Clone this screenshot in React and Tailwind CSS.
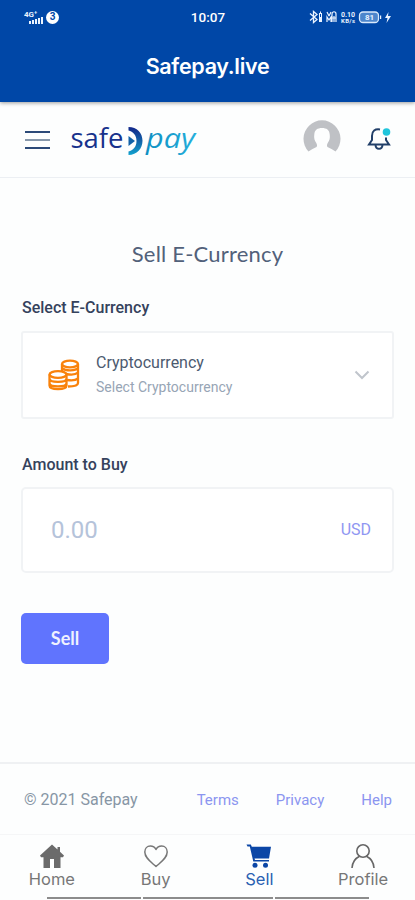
const HomeIcon = () => (
  <svg width="26" height="26" viewBox="0 0 26 26" fill="#6b6b6b">
    <path d="M13 1.500 1 12.500l1 1.700h2.500V25H11v-9h4v9h6.500V14.200H24l1-1.700-4-3.700V4h-2.500v2.500z" />
  </svg>
);

const HeartIcon = () => (
  <svg width="26" height="26" viewBox="0 0 26 26" fill="none" stroke="#777" strokeWidth="1.500">
    <path
      strokeLinejoin="round"
      d="M13 23.500C8 19 1.800 15 1.800 9 1.800 5.500 4.200 3 7.300 3 10 3 12 4.300 13 6.500 14 4.300 16 3 18.700 3c3.100 0 5.500 2.500 5.500 6 0 6-6.200 10-11.200 14.500z"
    />
  </svg>
);

const CartIcon = () => (
  <svg width="26" height="26" viewBox="0 0 26 26" fill="#0b46a6">
    <path d="M.5 1.500h4.300l1 2.200H25L23 15.500H8.500l.5 1.500h14v1.500H7.300L3.800 3.500H1.500z" />
    <circle cx="9" cy="22.200" r="2.500" />
    <circle cx="19.500" cy="22.200" r="2.500" />
  </svg>
);

const ProfileIcon = () => (
  <svg width="26" height="26" viewBox="0 0 26 26" fill="none" stroke="#666" strokeWidth="1.600">
    <circle cx="13" cy="8" r="6.200" />
    <path d="M2 25c.4-6.200 3-9.500 7.500-11.700M24 25c-.4-6.200-3-9.500-7.500-11.700" />
  </svg>
);

const CoinsIcon = () => (
  <svg
    width="32"
    height="32"
    viewBox="0 0 32 32"
    fill="none"
    stroke="#f9820b"
    strokeWidth="2.300"
    className="shrink-0"
  >
    <ellipse cx="22" cy="5" rx="8" ry="3.300" />
    <path d="M14 5v7M30 5v19c0 2-3.500 3.500-10 3.500M14.500 9.500c3 2.500 13 2.500 15.500-.5M18 15c5 1 10 .5 12-1.500M19 21c5 .8 9 .2 11-1.700" />
    <ellipse cx="10" cy="15.500" rx="8.500" ry="3.300" />
    <path d="M1.500 15.500v11c0 4.700 17 4.700 17 0v-11M1.500 19.500c0 4.500 17 4.500 17 0M1.500 24c0 4.500 17 4.500 17 0" />
  </svg>
);

const Logo = () => (
  <svg width="134" height="52" viewBox="0 -6 134 52" className="ml-5">
    <defs>
      <linearGradient id="mark" x1="0" y1="0" x2="0" y2="1">
        <stop offset="0" stopColor="#12268a" />
        <stop offset="0.500" stopColor="#1262a8" />
        <stop offset="1" stopColor="#12a3cf" />
      </linearGradient>
      <linearGradient id="pay" x1="0" y1="0" x2="1" y2="0">
        <stop offset="0" stopColor="#0d8fc2" />
        <stop offset="1" stopColor="#25b0dc" />
      </linearGradient>
    </defs>
    <text
      x="0.500"
      y="28"
      fontFamily="'Open Sans', sans-serif"
      fontSize="28"
      fill="#17328c"
      textLength="53"
      lengthAdjust="spacingAndGlyphs"
    >
      safe
    </text>
    <path
      d="M58.500 7C67 7 72.500 13 72.500 20.800S67 35 58.500 35v-3.600C63 30.500 66.500 27 66.500 21S63 11.500 58.500 10.500z"
      fill="url(#mark)"
    />
    <path d="M58.500 16l6.500 5-6.500 5z" fill="#1262a8" />
    <text
      x="76"
      y="28"
      fontFamily="'Open Sans', sans-serif"
      fontSize="28"
      fontStyle="italic"
      fill="url(#pay)"
      textLength="49"
      lengthAdjust="spacingAndGlyphs"
    >
      pay
    </text>
  </svg>
);

const StatusBar = () => (
  <div className="flex h-[34px] items-center justify-between pl-6 pr-[23px] text-white">
    <div className="flex w-[130px] items-center gap-[2px]">
      <svg width="20" height="15" viewBox="0 0 20 15" fill="#eaf3ff">
        <text x="0" y="7" fontFamily="Roboto, sans-serif" fontSize="8" fontWeight="700">
          4G⁺
        </text>
        <path d="M5 11h2v3H5zM8 10h2v4H8zM11 9h2v5h-2zM14 8h2v6h-2zM17 7h2v7h-2z" />
      </svg>
      <span className="flex size-[13px] items-center justify-center rounded-full bg-white text-[10px] font-bold leading-none text-[#0047a7]">
        3
      </span>
    </div>
    <span className="text-[13.500px] font-medium">10:07</span>
    <div className="flex w-[130px] items-center justify-end">
      <svg width="83" height="16" viewBox="0 0 83 16" fill="#eaf3ff">
        <path d="M1 4.500l7 6-3.500 3v-11l3.500 3-7 6" fill="none" stroke="#eaf3ff" strokeWidth="1.300" />
        <path d="M10 4h3v9h-3zM11 2.500h1V4h-1z" />
        <path d="M11 5h1v3h-1z" fill="#0047a7" />
        <path
          d="M18 3l2 4M22 3l-2 4M18 13V8l2 3 2-3v5M23 13V5c0-3 4-3 4 0v8M25 7v6M23 9h4"
          fill="none"
          stroke="#eaf3ff"
          strokeWidth="1.200"
        />
        <text x="32" y="7.500" fontFamily="Roboto, sans-serif" fontSize="7" fontWeight="700" textLength="14">
          0.10
        </text>
        <text x="32" y="14" fontFamily="Roboto, sans-serif" fontSize="6" fontWeight="700" textLength="14">
          KB/s
        </text>
        <rect x="50.500" y="3" width="19" height="10.500" rx="3.500" fill="#4d86cc" stroke="#d9e9fb" strokeWidth="1.300" />
        <path d="M71 6.500h1.200v3.500H71z" />
        <text x="56" y="11.300" fontFamily="Roboto, sans-serif" fontSize="8" fontWeight="700">
          81
        </text>
        <path d="M79.500 3l-3.500 6h2.500l-1 5 4.500-7h-3z" />
      </svg>
    </div>
  </div>
);

const tabs = [
  { name: 'Home', icon: HomeIcon },
  { name: 'Buy', icon: HeartIcon },
  { name: 'Sell', icon: CartIcon, active: true },
  { name: 'Profile', icon: ProfileIcon },
];

const App = () => {
  return (
    <div className="flex h-[900px] w-[415px] flex-col overflow-hidden bg-[#fdfefe] font-['Roboto',sans-serif]">
      <header className="z-10 h-[102px] shrink-0 bg-[#0047a7] shadow-[0_1px_4px_rgba(0,0,0,0.4)]">
        <StatusBar />
        <h1 className="mt-4 text-center font-['Inter',sans-serif] text-[21.500px] font-semibold leading-8 tracking-[-0.3px] text-white">
          Safepay.live
        </h1>
      </header>

      <div className="flex h-[76px] shrink-0 items-center border-b border-[#eceff3] pl-[25px] pr-6">
        <div className="flex w-[25px] shrink-0 flex-col gap-[6px]">
          <span className="h-[2px] bg-[#2c4a78]" />
          <span className="h-[2px] bg-[#8798ab]" />
          <span className="h-[2px] bg-[#2c4a78]" />
        </div>
        <Logo />
        <svg width="38" height="38" viewBox="0 0 38 38" className="-mt-1 ml-auto mr-px">
          <path
            d="M5.500 32.500A18.500 18.500 0 1 1 32.500 32.500C30 30.500 27 29.500 24.500 28c-1-1-.5-3 .5-4.500 2-3 2-5 1.700-8C26.500 11 23.500 9 19 9s-7.500 2-7.700 6.500c-.3 3-.3 5 1.700 8 1 1.500 1.500 3.500.5 4.500-2.500 1.500-5.500 2.500-8 4.500z"
            fill="#bfc1c5"
          />
        </svg>
        <svg width="24" height="26" viewBox="0 0 24 26" fill="none" className="-mt-[2px] ml-[25px]">
          <path
            d="M13 3.500C8 2.700 5 5 5 10v4l-3 4.500h20L19 14v-2.500M8.500 19c.3 5 6.700 5 7 0"
            stroke="#213f69"
            strokeWidth="2"
          />
          <circle cx="19.500" cy="6" r="3.800" fill="#20c5dc" />
        </svg>
      </div>

      <main className="flex h-[584px] shrink-0 flex-col px-[21px] pt-[60px]">
        <h2 className="text-center font-['Lato',sans-serif] text-[22px] leading-8 tracking-[0.2px] text-[#52617a]">
          Sell E-Currency
        </h2>

        <label className="mt-[26px] pl-px text-base font-medium leading-6 text-[#35425c]">Select E-Currency</label>
        <div className="mt-[11px] flex h-[88px] items-center rounded-[3px] border-2 border-[#f1f3f5] bg-white pl-[25px] pr-[22px]">
          <CoinsIcon />
          <div className="ml-[16px]">
            <p className="text-base leading-6 text-[#4c5a6f]">Cryptocurrency</p>
            <p className="text-sm leading-6 text-[#97a5b5]">Select Cryptocurrency</p>
          </div>
          <svg width="16" height="10" viewBox="0 0 16 10" fill="none" className="ml-auto">
            <path d="M1.500 1.500L8 8l6.500-6.500" stroke="#c0c5cc" strokeWidth="2" />
          </svg>
        </div>

        <label className="mt-[34px] pl-px text-base font-medium leading-6 text-[#35425c]">Amount to Buy</label>
        <div className="mt-[10px] flex h-[86px] items-center justify-between rounded-[5px] border-2 border-[#f1f3f5] bg-white pl-7 pr-[21px]">
          <span className="text-2xl text-[#b5c3da]">0.00</span>
          <span className="text-base text-[#8f96f2]">USD</span>
        </div>

        <button className="mt-[40px] h-[51px] w-[88px] rounded-[5px] bg-[#6074fe] font-['Lato',sans-serif] text-[18px] font-bold text-[#eef1ff]">
          Sell
        </button>
      </main>

      <footer className="flex h-[72px] shrink-0 items-center border-t-2 border-[#eff1f3] pl-6 pr-[23px] pt-[2px] text-base text-[#8b95f0]">
        <span className="text-[#8796a5]">© 2021 Safepay</span>
        <div className="ml-auto flex gap-[37px] text-[15px]">
          <a>Terms</a>
          <a>Privacy</a>
          <a>Help</a>
        </div>
      </footer>

      <nav className="relative flex h-[66px] shrink-0 border-t border-[#f5f6f7] font-['Inter',sans-serif] text-[16.500px]">
        {tabs.map(({ name, icon: Icon, active }) => (
          <div
            key={name}
            className={`flex flex-1 flex-col items-center pt-2 ${active ? 'text-[#2a61b2]' : 'text-[#777]'}`}
          >
            <Icon />
            <span className="-mt-px leading-[22px]">{name}</span>
          </div>
        ))}
        <div className="absolute bottom-px left-[47px] flex h-[2px] w-[322px] gap-[2px]">
          <span className="w-[94px] bg-[#8c8c8c]" />
          <span className="w-[130px] bg-[#8c8c8c]" />
          <span className="w-[94px] bg-[#8c8c8c]" />
        </div>
      </nav>
    </div>
  );
};

export default App;
